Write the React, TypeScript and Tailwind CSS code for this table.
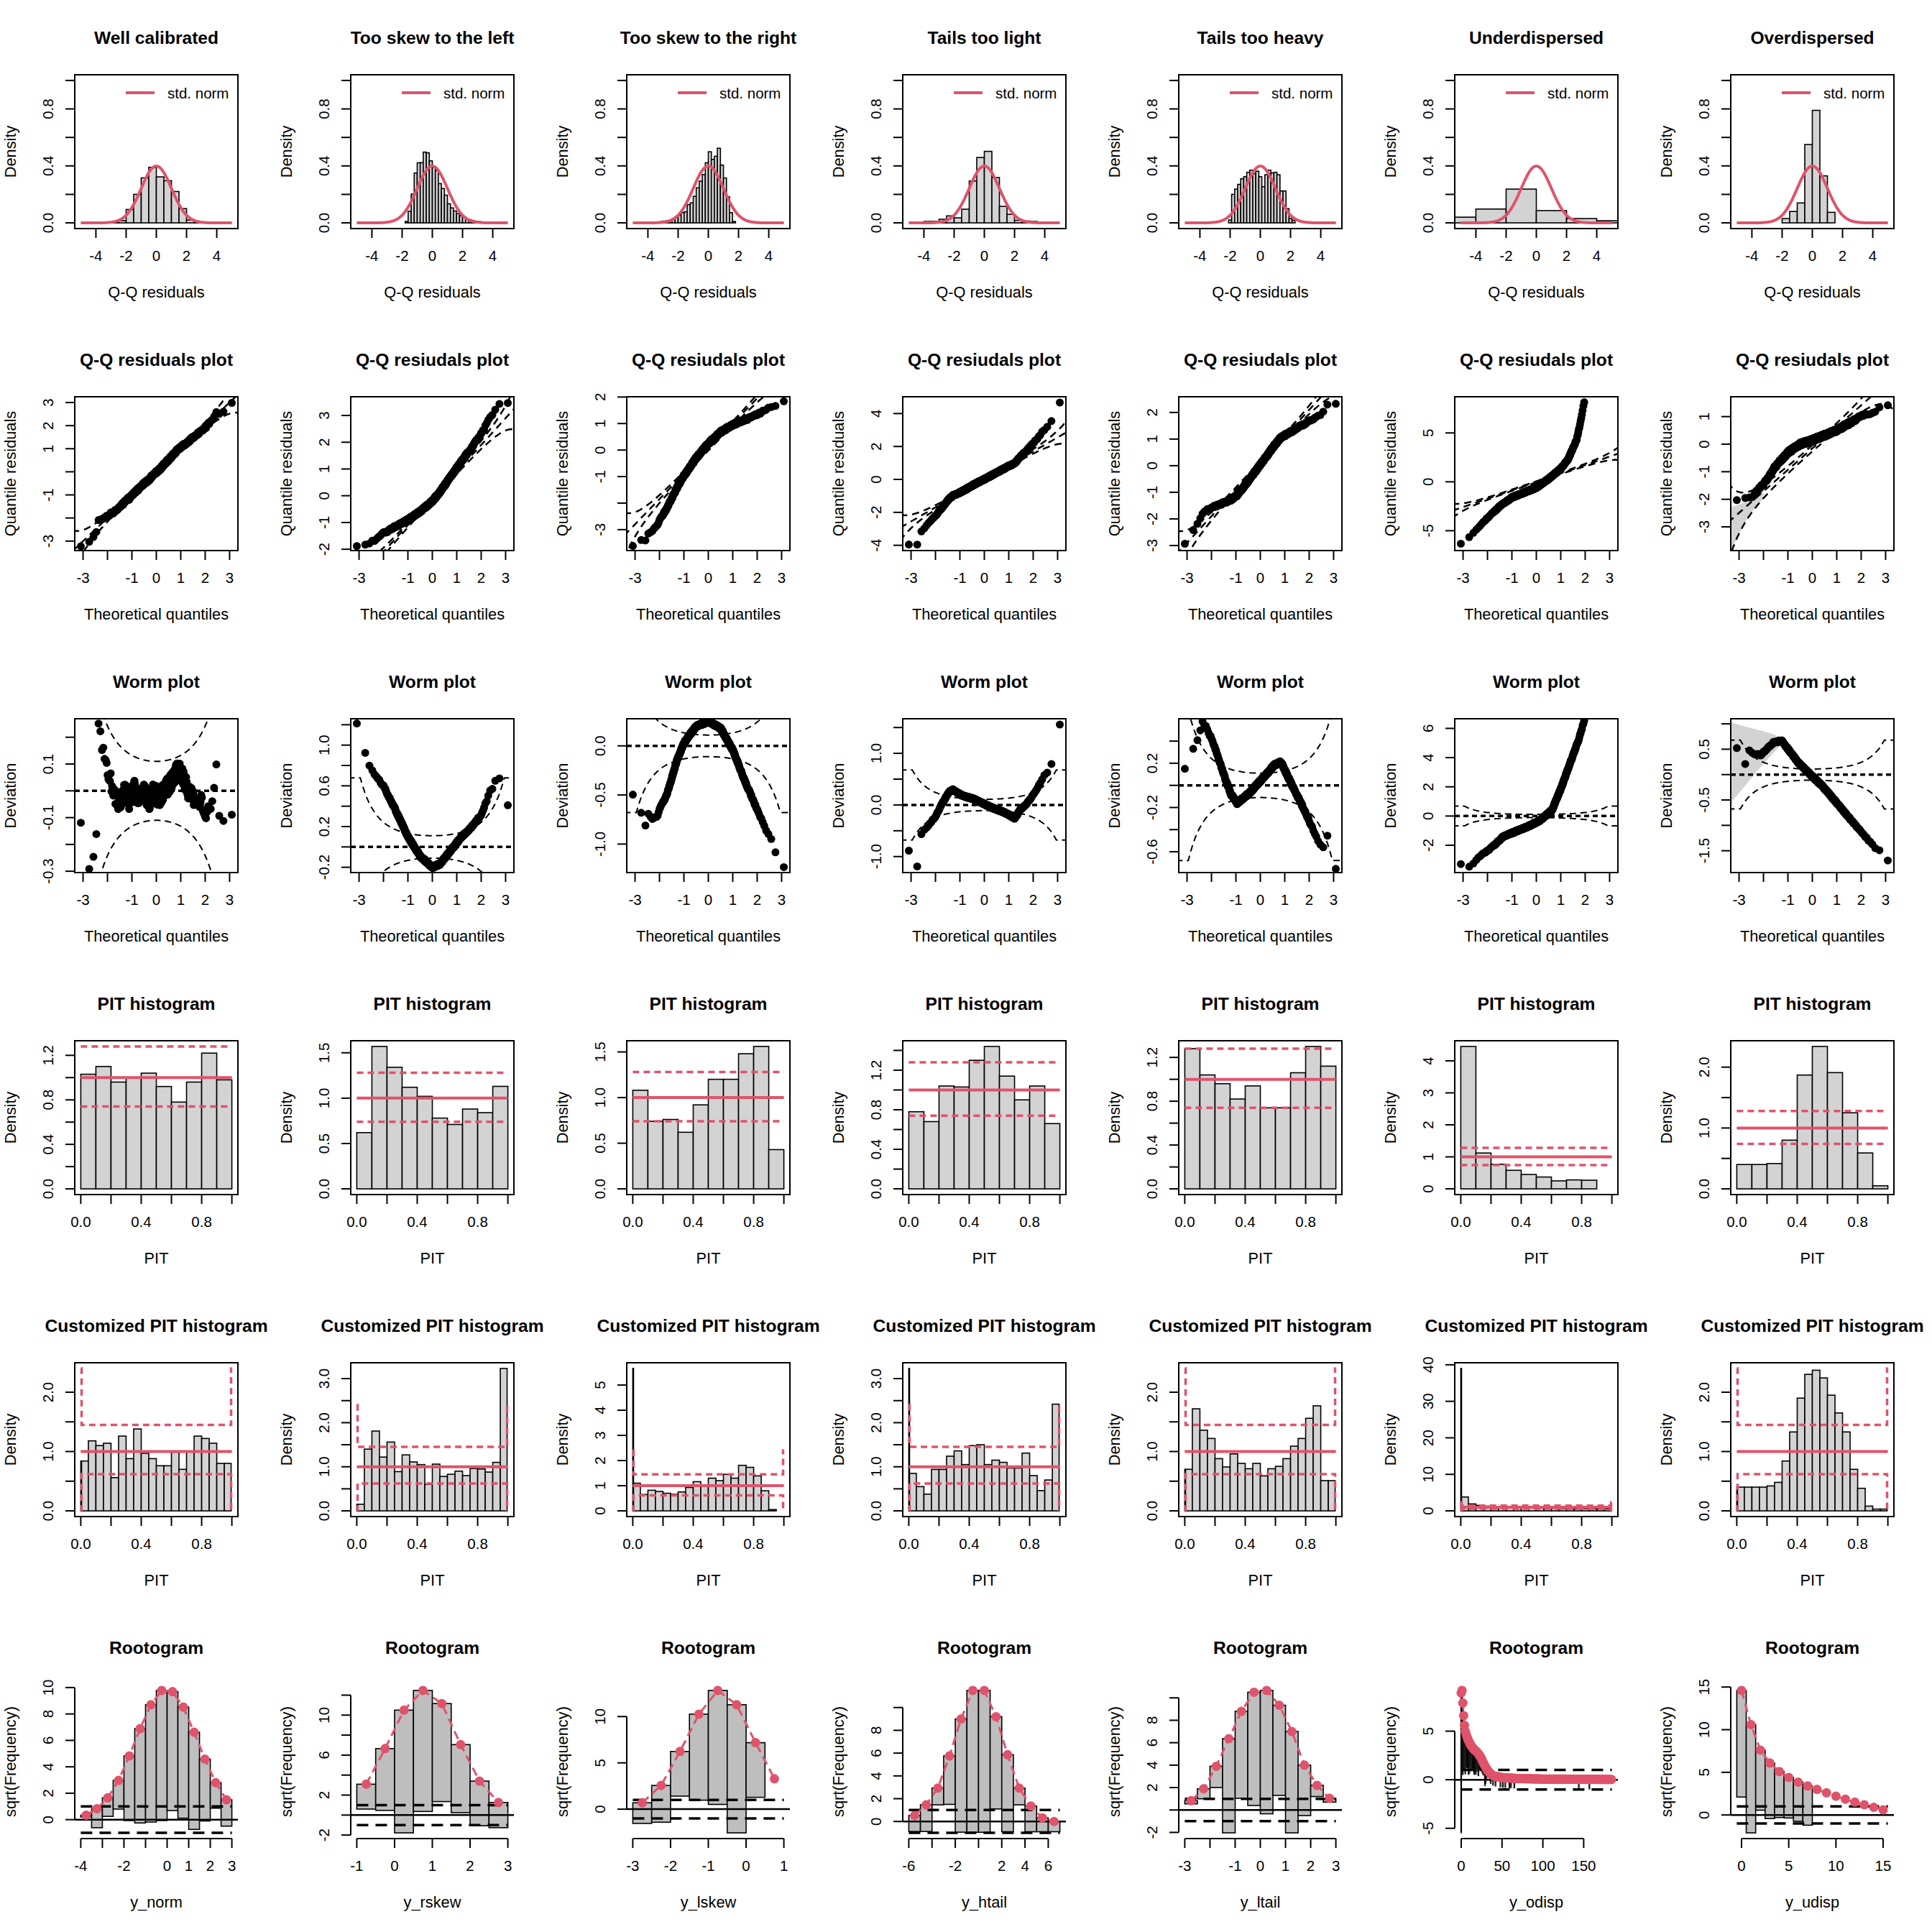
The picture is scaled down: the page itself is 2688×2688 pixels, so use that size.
import React from "react";

type Lim = [number, number];
type Pt = [number, number];
type Sc = { x: (v: number) => number; y: (v: number) => number };

const CW = 384;
const CH = 448;
const PL = 104;
const PR = 331;
const PT = 104;
const PB = 318;
const MID = (PL + PR) / 2;
const RED = "#DF536B";
const FS = 20.5;
const FL = 21.8;

const pad = (a: number, b: number): Lim => [a - 0.04 * (b - a), b + 0.04 * (b - a)];
const seq = (a: number, b: number, s: number) => {
  const out: number[] = [];
  for (let i = 0; a + i * s <= b + 1e-9; i++) out.push(+(a + i * s).toFixed(6));
  return out;
};
const f1 = (v: number) => v.toFixed(1);
const f0 = (v: number) => String(v);

function rng(seed: number) {
  let a = seed;
  return () => {
    a |= 0;
    a = (a + 0x6d2b79f5) | 0;
    let t = Math.imul(a ^ (a >>> 15), 1 | a);
    t = (t + Math.imul(t ^ (t >>> 7), 61 | t)) ^ t;
    return ((t ^ (t >>> 14)) >>> 0) / 4294967296;
  };
}

function qnorm(p: number) {
  const a = [-39.69683028665376, 220.9460984245205, -275.9285104469687, 138.357751867269, -30.66479806614716, 2.506628277459239];
  const b = [-54.47609879822406, 161.5858368580409, -155.6989798598866, 66.80131188771972, -13.28068155288572];
  const c = [-0.007784894002430293, -0.3223964580411365, -2.400758277161838, -2.549732539343734, 4.374664141464968, 2.938163982698783];
  const d = [0.007784695709041462, 0.3224671290700398, 2.445134137142996, 3.754408661907416];
  const lo = 0.02425;
  if (p < lo) {
    const q = Math.sqrt(-2 * Math.log(p));
    return (((((c[0] * q + c[1]) * q + c[2]) * q + c[3]) * q + c[4]) * q + c[5]) / ((((d[0] * q + d[1]) * q + d[2]) * q + d[3]) * q + 1);
  }
  if (p > 1 - lo) {
    const q = Math.sqrt(-2 * Math.log(1 - p));
    return -(((((c[0] * q + c[1]) * q + c[2]) * q + c[3]) * q + c[4]) * q + c[5]) / ((((d[0] * q + d[1]) * q + d[2]) * q + d[3]) * q + 1);
  }
  const q = p - 0.5;
  const r = q * q;
  return ((((((a[0] * r + a[1]) * r + a[2]) * r + a[3]) * r + a[4]) * r + a[5]) * q) / (((((b[0] * r + b[1]) * r + b[2]) * r + b[3]) * r + b[4]) * r + 1);
}

function pnorm(z: number) {
  const t = 1 / (1 + 0.2316419 * Math.abs(z));
  const d = 0.3989423 * Math.exp((-z * z) / 2);
  const p = d * t * (0.3193815 + t * (-0.3565638 + t * (1.781478 + t * (-1.821256 + t * 1.330274))));
  return z > 0 ? 1 - p : p;
}
const dnorm = (z: number) => Math.exp((-z * z) / 2) / Math.sqrt(2 * Math.PI);
const se = (z: number) => {
  const p = pnorm(z);
  return Math.sqrt((p * (1 - p)) / 500) / dnorm(z);
};

const interp = (c: Pt[], z: number) => {
  if (z <= c[0][0]) return c[0][1];
  for (let i = 1; i < c.length; i++) {
    if (z <= c[i][0]) {
      const [x0, y0] = c[i - 1];
      const [x1, y1] = c[i];
      return y0 + ((y1 - y0) * (z - x0)) / (x1 - x0);
    }
  }
  return c[c.length - 1][1];
};

const Z = Array.from({ length: 500 }, (_, i) => qnorm((i + 0.5) / 500));

const mkScale = (xl: Lim, yl: Lim): Sc => ({
  x: (v) => PL + ((v - xl[0]) / (xl[1] - xl[0])) * (PR - PL),
  y: (v) => PB - ((v - yl[0]) / (yl[1] - yl[0])) * (PB - PT),
});
const line = (pts: Pt[], s: Sc) =>
  pts.map(([x, y], i) => `${i ? "L" : "M"}${s.x(x).toFixed(1)},${s.y(y).toFixed(1)}`).join("");

type PanelProps = {
  id: string;
  title: string;
  xlab: string;
  ylab: string;
  xl: Lim;
  yl: Lim;
  xt: number[];
  xL: number[];
  yt: number[];
  yL: number[];
  fx?: (v: number) => string;
  fy?: (v: number) => string;
  box?: boolean;
  children: (s: Sc) => React.ReactNode;
};

function Panel({ id, title, xlab, ylab, xl, yl, xt, xL, yt, yL, fx = f0, fy = f0, box = true, children }: PanelProps) {
  const s = mkScale(xl, yl);
  return (
    <svg width={CW} height={CH} className="block">
      <defs>
        <clipPath id={id}>
          <rect x={PL} y={PT} width={PR - PL} height={PB - PT} />
        </clipPath>
      </defs>
      <text x={MID} y={61} textAnchor="middle" fontSize={24.6} fontWeight={700}>
        {title}
      </text>
      <g clipPath={`url(#${id})`}>{children(s)}</g>
      {box && <rect x={PL} y={PT} width={PR - PL} height={PB - PT} fill="none" stroke="#000" strokeWidth={2} />}
      <g stroke="#000" strokeWidth={2}>
        <line x1={s.x(Math.min(...xt))} x2={s.x(Math.max(...xt))} y1={PB} y2={PB} />
        {xt.map((t) => (
          <line key={`x${t}`} x1={s.x(t)} x2={s.x(t)} y1={PB} y2={PB + 13} />
        ))}
        <line x1={PL} x2={PL} y1={s.y(Math.min(...yt))} y2={s.y(Math.max(...yt))} />
        {yt.map((t) => (
          <line key={`y${t}`} x1={PL - 13} x2={PL} y1={s.y(t)} y2={s.y(t)} />
        ))}
      </g>
      <g fontSize={FS} textAnchor="middle">
        {xL.map((v) => (
          <text key={`xl${v}`} x={s.x(v)} y={363}>
            {fx(v)}
          </text>
        ))}
        {yL.map((v) => (
          <text key={`yl${v}`} transform={`translate(74 ${s.y(v).toFixed(1)}) rotate(-90)`}>
            {fy(v)}
          </text>
        ))}
      </g>
      <g fontSize={FL} textAnchor="middle">
        <text x={MID} y={414}>
          {xlab}
        </text>
        <text transform={`translate(21.5 ${(PT + PB) / 2}) rotate(-90)`}>{ylab}</text>
      </g>
    </svg>
  );
}

/* ---------- row 1: residual histograms ---------- */

const gpdf = (g: number) => (g <= 0 ? 0 : (g ** 3 * Math.exp(-g / 0.45)) / (6 * 0.45 ** 4));
const skewBars = (mirror: boolean, seed: number) => {
  const r = rng(seed);
  const x0 = mirror ? -3.6 : -2.0;
  const h: number[] = [];
  for (let i = 0; i < 28; i++) {
    const c = x0 + 0.2 * i + 0.1;
    h.push(gpdf(mirror ? 1.85 - c : c + 1.85) * (0.86 + 0.26 * r()));
  }
  return { x0, w: 0.2, h };
};

const ROW1 = [
  { title: "Well calibrated", x0: -3.5, w: 0.5, h: [0.003, 0.006, 0.016, 0.094, 0.2, 0.316, 0.39, 0.323, 0.296, 0.22, 0.1, 0.02, 0.005] },
  { title: "Too skew to the left", ...skewBars(false, 11) },
  { title: "Too skew to the right", ...skewBars(true, 12) },
  {
    title: "Tails too light",
    x0: -4,
    w: 0.5,
    h: [0.01, 0.01, 0.025, 0.049, 0.035, 0.096, 0.294, 0.459, 0.502, 0.318, 0.116, 0.06, 0.018, 0.013, 0.01],
  },
  {
    title: "Tails too heavy",
    x0: -2.1,
    w: 0.2,
    h: [0.02, 0.2, 0.237, 0.27, 0.31, 0.324, 0.355, 0.37, 0.345, 0.363, 0.324, 0.254, 0.338, 0.37, 0.35, 0.355, 0.338, 0.224, 0.224, 0.1, 0.03, 0.018],
  },
  { title: "Underdispersed", x0: -6, w: 2, h: [0.04, 0.097, 0.237, 0.086, 0.03, 0.015] },
  { title: "Overdispersed", x0: -2, w: 0.5, h: [0.03, 0.08, 0.14, 0.55, 0.79, 0.33, 0.074] },
];

function ResidHist({ id, title, x0, w, h }: { id: string; title: string; x0: number; w: number; h: number[] }) {
  return (
    <Panel
      id={id}
      title={title}
      xlab="Q-Q residuals"
      ylab="Density"
      xl={pad(-5, 5)}
      yl={pad(0, 1)}
      xt={[-4, -2, 0, 2, 4]}
      xL={[-4, -2, 0, 2, 4]}
      yt={seq(0, 1, 0.2)}
      yL={[0, 0.4, 0.8]}
      fy={f1}
    >
      {(s) => (
        <>
          {h.map((v, i) =>
            v > 0.002 ? (
              <rect
                key={i}
                x={s.x(x0 + i * w)}
                y={s.y(v)}
                width={s.x(x0 + (i + 1) * w) - s.x(x0 + i * w)}
                height={s.y(0) - s.y(v)}
                fill="#D3D3D3"
                stroke="#000"
                strokeWidth={1.6}
              />
            ) : null
          )}
          <path d={line(seq(-5, 5, 0.05).map((x) => [x, dnorm(x)] as Pt), s)} fill="none" stroke={RED} strokeWidth={4} />
          <line x1={175} x2={215} y1={129} y2={129} stroke={RED} strokeWidth={4} />
          <text x={233} y={136.5} fontSize={FS}>
            std. norm
          </text>
        </>
      )}
    </Panel>
  );
}

/* ---------- rows 2 and 3: Q-Q and worm plots ---------- */

type WSpec = { ctrl: Pt[]; yl: Lim; yt: number[]; yL: number[]; noise: number; int?: boolean; zmax?: number; shade?: Pt[] };
type QSpec = { ctrl?: Pt[]; yl: Lim; yt: number[]; yL: number[]; a: number; b: number; k: number; shade?: boolean };

const WORMS: WSpec[] = [
  {
    ctrl: [
      [-3.09, -0.1], [-2.75, -0.28], [-2.58, -0.25], [-2.46, -0.2], [-2.37, 0.25], [-2.29, 0.21], [-2.17, 0.16], [-2.0, 0.08],
      [-1.85, 0.03], [-1.7, -0.02], [-1.5, -0.05], [-1.3, 0.0], [-1.1, -0.04], [-0.9, 0.01], [-0.7, -0.03], [-0.5, 0.0],
      [-0.3, -0.04], [-0.1, 0.0], [0.1, -0.03], [0.3, 0.0], [0.5, 0.02], [0.7, 0.05], [0.9, 0.08], [1.1, 0.05], [1.3, 0.0],
      [1.5, -0.02], [1.7, -0.03], [1.9, -0.05], [2.05, -0.09], [2.2, -0.08], [2.29, -0.06], [2.37, 0.04], [2.46, 0.13],
      [2.58, -0.11], [2.75, -0.09], [3.09, -0.1],
    ],
    yl: [-0.305, 0.269],
    yt: [-0.3, -0.2, -0.1, 0, 0.1, 0.2],
    yL: [-0.3, -0.1, 0.1],
    noise: 0.032,
  },
  {
    ctrl: [
      [-3.09, 1.22], [-2.75, 0.92], [-2.58, 0.8], [-2.46, 0.75], [-2.3, 0.69], [-2.0, 0.6], [-1.5, 0.36], [-1.0, 0.1],
      [-0.5, -0.09], [0, -0.2], [0.3, -0.17], [0.7, -0.05], [1.2, 0.1], [1.7, 0.22], [2.0, 0.32], [2.17, 0.42], [2.29, 0.5],
      [2.37, 0.55], [2.46, 0.58], [2.58, 0.65], [2.75, 0.68], [3.09, 0.4],
    ],
    yl: [-0.252, 1.259],
    yt: [-0.2, 0, 0.2, 0.4, 0.6, 0.8, 1.0, 1.2],
    yL: [-0.2, 0.2, 0.6, 1.0],
    noise: 0.01,
  },
  {
    ctrl: [
      [-3.09, -0.5], [-2.75, -0.68], [-2.58, -0.82], [-2.46, -0.7], [-2.3, -0.75], [-2.1, -0.72], [-1.95, -0.62], [-1.7, -0.5],
      [-1.3, -0.16], [-1.0, 0.03], [-0.5, 0.2], [0, 0.25], [0.5, 0.18], [1.0, -0.04], [1.5, -0.36], [2.0, -0.65], [2.36, -0.85],
      [2.58, -0.95], [2.75, -1.09], [3.09, -1.24],
    ],
    yl: [-1.29, 0.276],
    yt: [-1, -0.5, 0],
    yL: [-1, -0.5, 0],
    noise: 0.01,
  },
  {
    ctrl: [
      [-3.09, -0.88], [-2.75, -1.21], [-2.58, -0.56], [-2.3, -0.4], [-2.0, -0.22], [-1.7, 0.05], [-1.45, 0.25], [-1.3, 0.3],
      [-0.9, 0.18], [-0.45, 0.12], [0.3, -0.05], [0.8, -0.14], [1.0, -0.19], [1.25, -0.26], [1.45, -0.1], [1.7, 0.0],
      [2.0, 0.2], [2.2, 0.35], [2.36, 0.5], [2.46, 0.58], [2.58, 0.62], [2.75, 0.8], [3.09, 1.55],
    ],
    yl: [-1.31, 1.67],
    yt: [-1, -0.5, 0, 0.5, 1, 1.5],
    yL: [-1, 0, 1],
    noise: 0.012,
  },
  {
    ctrl: [
      [-3.09, 0.14], [-2.75, 0.32], [-2.58, 0.4], [-2.46, 0.5], [-2.37, 0.58], [-2.2, 0.52], [-2.0, 0.42], [-1.8, 0.3],
      [-1.5, 0.1], [-1.2, -0.08], [-0.95, -0.16], [-0.45, -0.07], [0, 0.04], [0.6, 0.19], [0.85, 0.21], [1.3, 0.0],
      [1.8, -0.22], [2.2, -0.42], [2.36, -0.5], [2.46, -0.53], [2.58, -0.57], [2.75, -0.46], [3.09, -0.76],
    ],
    yl: [-0.788, 0.602],
    yt: [-0.6, -0.4, -0.2, 0, 0.2, 0.4],
    yL: [-0.6, -0.2, 0.2],
    noise: 0.01,
  },
  {
    ctrl: [
      [-3.09, -3.25], [-2.75, -3.45], [-2.58, -3.3], [-2.35, -2.8], [-1.85, -2.2], [-1.35, -1.4], [-0.85, -1.05],
      [-0.35, -0.72], [0.15, -0.3], [0.65, 0.43], [1.05, 2.07], [1.4, 3.7], [1.75, 5.3], [1.95, 6.5],
    ],
    yl: [-3.87, 6.66],
    yt: [-2, 0, 2, 4, 6],
    yL: [-2, 0, 2, 4, 6],
    noise: 0.05,
    int: true,
    zmax: 1.96,
  },
  {
    ctrl: [
      [-3.09, 0.53], [-2.75, 0.2], [-2.58, 0.49], [-2.46, 0.42], [-2.3, 0.4], [-2.1, 0.39], [-1.6, 0.63], [-1.25, 0.67],
      [-0.6, 0.25], [-0.1, 0.01], [0.4, -0.22], [0.9, -0.5], [1.4, -0.79], [1.9, -1.07], [2.4, -1.35], [2.58, -1.45],
      [2.75, -1.5], [3.09, -1.68],
    ],
    yl: [-1.93, 1.1],
    yt: [-1.5, -1, -0.5, 0, 0.5, 1],
    yL: [-1.5, -0.5, 0.5],
    noise: 0.015,
    shade: [
      [-3.45, 1.05], [-2.8, 0.95], [-2.2, 0.88], [-1.6, 0.8], [-1.1, 0.68], [-1.6, 0.42], [-2.2, 0.1], [-2.8, -0.25], [-3.45, -0.62],
    ],
  },
];

const QQS: QSpec[] = [
  { yl: [-3.41, 3.25], yt: [-3, -2, -1, 0, 1, 2, 3], yL: [3, 2, 1, -1, -3], a: 0, b: 1, k: 1.3 },
  { yl: [-2.05, 3.7], yt: [-2, -1, 0, 1, 2, 3], yL: [-2, -1, 0, 1, 2, 3], a: -0.1, b: 1.0, k: 1.25 },
  { yl: [-3.79, 2.01], yt: [-3, -2, -1, 0, 1, 2], yL: [-3, -1, 0, 1, 2], a: 0.05, b: 0.95, k: 1.3 },
  { yl: [-4.32, 5.02], yt: [-4, -2, 0, 2, 4], yL: [-4, -2, 0, 2, 4], a: 0, b: 0.85, k: 1.3 },
  { yl: [-3.19, 2.59], yt: [-3, -2, -1, 0, 1, 2], yL: [-3, -2, -1, 0, 1, 2], a: 0.1, b: 1.0, k: 1.3 },
  {
    ctrl: [
      [-3.09, -6.3], [-2.85, -6.0], [-2.5, -5.0], [-2.0, -3.7], [-1.5, -2.5], [-1.0, -1.6], [-0.5, -1.1], [0, -0.6], [0.5, 0.3],
      [1, 1.35], [1.3, 2.3], [1.65, 4.3], [1.8, 6.0], [1.95, 8.1],
    ],
    yl: [-7.03, 8.7],
    yt: [-5, 0, 5],
    yL: [-5, 0, 5],
    a: 0,
    b: 0.86,
    k: 1.2,
  },
  {
    ctrl: [
      [-3.09, -2.05], [-2.75, -2.0], [-2.58, -1.98], [-2.4, -1.85], [-2.0, -1.45], [-1.5, -0.8], [-1.0, -0.3], [-0.5, 0.0],
      [0, 0.15], [1, 0.5], [2, 1.0], [2.5, 1.2], [2.75, 1.3], [3.09, 1.37],
    ],
    yl: [-3.86, 1.72],
    yt: [-3, -2, -1, 0, 1],
    yL: [-3, -2, -1, 0, 1],
    a: -0.15,
    b: 0.78,
    k: 2.6,
    shade: true,
  },
];

const WORM_PTS: Pt[][] = WORMS.map((w, i) => {
  const r = rng(100 + i);
  return Z.filter((z) => z <= (w.zmax ?? 9)).map((z) => [z, interp(w.ctrl, z) + w.noise * (r() - 0.5) * 2] as Pt);
});
const QQ_PTS: Pt[][] = QQS.map((q, i) => {
  const r = rng(200 + i);
  if (!q.ctrl) return WORM_PTS[i].map(([z, d]) => [z, z + d + 0.04 * (r() - 0.5) * 2] as Pt);
  const c = q.ctrl;
  return Z.filter((z) => z <= c[c.length - 1][0] + 0.01).map((z) => [z, interp(c, z) + 0.06 * (r() - 0.5) * 2] as Pt);
});

const ZS = seq(-3.45, 3.45, 0.05);
const QX: Lim = [-3.34, 3.34];

function QQPanel({ id, title, q, pts }: { id: string; title: string; q: QSpec; pts: Pt[] }) {
  const c = (z: number) => q.a + q.b * z;
  const d = (z: number) => q.k * q.b * se(z);
  const left = ZS.filter((z) => z <= -2);
  return (
    <Panel
      id={id}
      title={title}
      xlab="Theoretical quantiles"
      ylab="Quantile residuals"
      xl={QX}
      yl={q.yl}
      xt={seq(-3, 3, 1)}
      xL={[-3, -1, 0, 1, 2, 3]}
      yt={q.yt}
      yL={q.yL}
    >
      {(s) => (
        <>
          {q.shade && (
            <path
              d={line([...left.map((z) => [z, c(z) + 0.4 * d(z)] as Pt), ...[...left].reverse().map((z) => [z, c(z) - d(z)] as Pt)], s) + "Z"}
              fill="#D3D3D3"
            />
          )}
          <g fill="none" stroke="#000" strokeWidth={2.5} strokeDasharray="10 7">
            <path d={line(ZS.map((z) => [z, c(z)] as Pt), s)} />
            <path d={line(ZS.map((z) => [z, c(z) + d(z)] as Pt), s)} />
            <path d={line(ZS.map((z) => [z, c(z) - d(z)] as Pt), s)} />
          </g>
          <g fill="#000">
            {pts.map(([x, y], i) => (
              <circle key={i} cx={s.x(x)} cy={s.y(y)} r={5.5} />
            ))}
          </g>
        </>
      )}
    </Panel>
  );
}

function WormPanel({ id, w, pts }: { id: string; w: WSpec; pts: Pt[] }) {
  const band = (z: number) => 1.96 * se(Math.max(-2.95, Math.min(2.95, z)));
  return (
    <Panel
      id={id}
      title="Worm plot"
      xlab="Theoretical quantiles"
      ylab="Deviation"
      xl={QX}
      yl={w.yl}
      xt={seq(-3, 3, 1)}
      xL={[-3, -1, 0, 1, 2, 3]}
      yt={w.yt}
      yL={w.yL}
      fy={w.int ? f0 : f1}
    >
      {(s) => (
        <>
          {w.shade && <path d={line(w.shade, s) + "Z"} fill="#D3D3D3" />}
          <g fill="none" stroke="#000" strokeWidth={2} strokeDasharray="9 6">
            <path d={line(ZS.map((z) => [z, band(z)] as Pt), s)} />
            <path d={line(ZS.map((z) => [z, -band(z)] as Pt), s)} />
          </g>
          <line x1={PL} x2={PR} y1={s.y(0)} y2={s.y(0)} stroke="#000" strokeWidth={3.5} strokeDasharray="7 5" />
          <g fill="#000">
            {pts.map(([x, y], i) => (
              <circle key={i} cx={s.x(x)} cy={s.y(y)} r={5.5} />
            ))}
          </g>
        </>
      )}
    </Panel>
  );
}

/* ---------- rows 4 and 5: PIT histograms ---------- */

type PSpec = { h: number[]; yt: number[]; yL: number[]; int?: boolean };

const PIT4: PSpec[] = [
  { h: [1.03, 1.1, 0.96, 1.0, 1.04, 0.92, 0.78, 0.96, 1.22, 0.98], yt: seq(0, 1.2, 0.2), yL: [0, 0.4, 0.8, 1.2] },
  { h: [0.62, 1.57, 1.34, 1.12, 1.02, 0.78, 0.71, 0.88, 0.84, 1.13], yt: [0, 0.5, 1, 1.5], yL: [0, 0.5, 1, 1.5] },
  { h: [1.08, 0.74, 0.76, 0.62, 0.92, 1.2, 1.2, 1.48, 1.56, 0.43], yt: [0, 0.5, 1, 1.5], yL: [0, 0.5, 1, 1.5] },
  { h: [0.78, 0.68, 1.04, 1.03, 1.3, 1.44, 1.14, 0.9, 1.04, 0.66], yt: seq(0, 1.4, 0.2), yL: [0, 0.4, 0.8, 1.2] },
  { h: [1.28, 1.04, 0.96, 0.82, 0.94, 0.74, 0.74, 1.06, 1.3, 1.12], yt: seq(0, 1.2, 0.2), yL: [0, 0.4, 0.8, 1.2] },
  { h: [4.45, 1.12, 0.77, 0.58, 0.45, 0.37, 0.25, 0.28, 0.27, 0], yt: [0, 1, 2, 3, 4], yL: [0, 1, 2, 3, 4], int: true },
  { h: [0.4, 0.4, 0.416, 0.8, 1.87, 2.34, 1.91, 1.25, 0.59, 0.05], yt: seq(0, 2, 0.5), yL: [0, 1, 2] },
];

const cust = (nl: number, m: number[], nr: number) => [nl, ...m, nr];
const PIT5: PSpec[] = [
  { h: cust(0.84, [0.84, 1.18, 1.1, 1.14, 0.56, 1.26, 0.88, 1.38, 0.97, 0.88, 0.76, 0.76, 0.99, 0.7, 1.0, 1.26, 1.22, 1.14, 0.8], 0.8), yt: seq(0, 2, 0.5), yL: [0, 1, 2] },
  { h: cust(0.15, [0.15, 1.4, 1.81, 1.22, 1.56, 0.89, 1.27, 1.11, 1.05, 0.6, 1.06, 0.78, 0.83, 0.9, 0.8, 0.96, 0.95, 0.88, 1.1], 3.23), yt: seq(0, 3, 0.5), yL: [0, 1, 2, 3] },
  { h: cust(5.66, [1.1, 0.65, 0.82, 0.77, 0.7, 0.66, 0.75, 0.93, 1.16, 1.0, 1.3, 1.2, 1.45, 1.3, 1.81, 1.73, 1.39, 0.8, 0.05], 0), yt: [0, 1, 2, 3, 4, 5], yL: [0, 1, 2, 3, 4, 5], int: true },
  { h: cust(3.23, [0.85, 0.55, 0.38, 0.94, 0.94, 1.24, 1.36, 1.05, 1.48, 1.5, 1.05, 1.15, 1.1, 0.97, 0.97, 1.31, 0.8, 0.46, 0.7], 2.42), yt: seq(0, 3, 0.5), yL: [0, 1, 2, 3] },
  { h: cust(0.7, [0.7, 1.72, 1.36, 1.22, 0.88, 0.74, 0.96, 0.8, 0.71, 0.8, 0.59, 0.71, 0.75, 0.88, 1.09, 1.22, 1.56, 1.77, 0.51], 0.51), yt: seq(0, 2, 0.5), yL: [0, 1, 2] },
  { h: cust(39, [3.8, 1.9, 1.5, 1.3, 1.1, 1.0, 0.9, 0.85, 0.8, 0.8, 0.75, 0.7, 0.7, 0.65, 0.65, 0.6, 0.6, 0.6, 0.55], 0.55), yt: [0, 10, 20, 30, 40], yL: [0, 10, 20, 30, 40], int: true },
  { h: cust(0.4, [0.4, 0.4, 0.4, 0.4, 0.42, 0.48, 0.84, 1.33, 1.9, 2.3, 2.37, 2.24, 1.95, 1.65, 1.33, 0.7, 0.38, 0.08, 0.03], 0.03), yt: seq(0, 2, 0.5), yL: [0, 1, 2] },
];

const E10 = seq(0, 1, 0.1);
const E21 = [0, 0.005, ...seq(0.05, 0.95, 0.05), 0.995, 1];
const B4U: Pt[] = [[0, 1.28], [1, 1.28]];
const B4L: Pt[] = [[0, 0.74], [1, 0.74]];
const B5U: Pt[] = [[0, 2.4], [0.005, 2.4], [0.005, 1.45], [0.995, 1.45], [0.995, 2.4], [1, 2.4]];
const B5L: Pt[] = [[0, 0], [0.005, 0], [0.005, 0.62], [0.995, 0.62], [0.995, 0], [1, 0]];

function PitPanel({ id, title, edges, p, upper, lower }: { id: string; title: string; edges: number[]; p: PSpec; upper: Pt[]; lower: Pt[] }) {
  const top = Math.max(...p.h, ...upper.map((u) => u[1]));
  return (
    <Panel
      id={id}
      title={title}
      xlab="PIT"
      ylab="Density"
      xl={pad(0, 1)}
      yl={pad(0, top)}
      xt={seq(0, 1, 0.2)}
      xL={[0, 0.4, 0.8]}
      yt={p.yt}
      yL={p.yL}
      fx={f1}
      fy={p.int ? f0 : f1}
    >
      {(s) => (
        <>
          {p.h.map((v, i) => (
            <rect
              key={i}
              x={s.x(edges[i])}
              y={s.y(v)}
              width={s.x(edges[i + 1]) - s.x(edges[i])}
              height={s.y(0) - s.y(v)}
              fill="#D3D3D3"
              stroke="#000"
              strokeWidth={1.6}
            />
          ))}
          <line x1={s.x(0)} x2={s.x(1)} y1={s.y(1)} y2={s.y(1)} stroke={RED} strokeWidth={4} />
          <g fill="none" stroke={RED} strokeWidth={3.5} strokeDasharray="9 6">
            <path d={line(upper, s)} />
            <path d={line(lower, s)} />
          </g>
        </>
      )}
    </Panel>
  );
}

/* ---------- row 6: rootograms ---------- */

type RBin = { x0: number; x1: number; e: number; b: number };
const bins = (x0: number, w: number, e: number[], b: number[]): RBin[] =>
  e.map((v, i) => ({ x0: x0 + i * w, x1: x0 + (i + 1) * w, e: v, b: Math.min(b[i], v) }));

const odE: Pt[] = [
  [0, 8.94], [1, 9.19], [2, 7.9], [3, 6.6], [4, 5.6], [5, 5.0], [6, 4.7], [8, 4.2], [12, 3.5], [16, 3.1], [20, 2.8],
  [24, 2.3], [28, 1.6], [32, 1.0], [36, 0.6], [40, 0.38], [50, 0.22], [70, 0.12], [100, 0.07], [184, 0.03],
];
const odHang = new Set([31, 36, 39, 42, 48, 51, 54, 59, 61, 65, 144, 157]);
const odBins: RBin[] = (() => {
  const r = rng(77);
  return Array.from({ length: 185 }, (_, k) => {
    const e = interp(odE, k);
    let b = e;
    if (k === 0) b = -5.47;
    else if (k <= 20) b = 0.5 + 0.9 * r();
    else if (k <= 30) b = e - (1 + 1.3 * r());
    else if (odHang.has(k)) b = e - 1;
    return { x0: k - 0.5, x1: k + 0.5, e, b: Math.min(b, e) };
  });
})();

const udE = [14.6, 10.6, 7.6, 6.1, 5.1, 4.4, 3.85, 3.4, 3.0, 2.6, 2.2, 1.85, 1.5, 1.2, 0.9, 0.6];
const udB = [2.1, -2.1, 0.56, -0.42, -0.3, -0.35, -0.75, -1.2, ...udE.slice(8)];

const ROOTS = [
  {
    xlab: "y_norm",
    bins: bins(-4, 0.5, [0.34, 0.83, 1.65, 2.97, 4.83, 6.89, 8.7, 9.78, 9.69, 8.52, 6.62, 4.58, 2.8, 1.5], [0.2, -0.61, 0.25, 0.8, -0.07, -0.25, -0.18, -0.07, 0.69, 0.11, -0.74, -0.1, 0.87, -0.49]),
    xt: seq(-4, 3, 1),
    xL: [-4, -2, 0, 1, 2, 3],
    yt: seq(0, 10, 2),
    yL: seq(0, 10, 2),
  },
  {
    xlab: "y_rskew",
    bins: bins(-1, 0.5, [3.09, 6.65, 10.5, 12.47, 11.16, 7.05, 3.4, 1.26], [0.6, 0.47, -1.78, 0.36, 1.35, 0.24, -1.07, -1.26]),
    xt: seq(-1, 3, 1),
    xL: seq(-1, 3, 1),
    yt: seq(-2, 12, 2),
    yL: [-2, 2, 6, 10],
  },
  {
    xlab: "y_lskew",
    bins: bins(-3, 0.5, [0.69, 2.56, 6.23, 10.26, 12.82, 11.28, 7.18, 3.28], [-1.54, -1.41, 1.41, 0.97, 0.51, -2.56, 1.28, 3.28]),
    xt: seq(-3, 1, 1),
    xL: seq(-3, 1, 1),
    yt: [0, 5, 10],
    yL: [0, 5, 10],
  },
  {
    xlab: "y_htail",
    bins: bins(-6, 1, [0.52, 1.46, 2.93, 5.75, 9.0, 11.5, 11.5, 9.2, 5.86, 2.93, 1.36, 0.31, 0.0], [-0.88, -0.88, 1.46, 1.5, -0.94, -0.95, -0.95, 1.1, -0.9, 1.46, -0.9, -0.9, -0.9]),
    xt: seq(-6, 6, 2),
    xL: [-6, -2, 2, 4, 6],
    yt: seq(0, 10, 2),
    yL: [0, 2, 4, 6, 8],
  },
  {
    xlab: "y_ltail",
    bins: bins(-3, 0.5, [0.83, 1.89, 3.9, 6.36, 8.8, 10.5, 10.66, 9.34, 7.0, 4.0, 2.2, 1.04], [0.55, 1.0, 2.0, -2.04, 1.04, 0.4, -0.34, 1.3, -2.04, -0.5, 1.2, 0.7]),
    xt: seq(-3, 3, 1),
    xL: [-3, -1, 0, 1, 2, 3],
    yt: seq(-2, 10, 2),
    yL: [-2, 2, 4, 6, 8],
  },
  { xlab: "y_odisp", bins: odBins, xt: [0, 50, 100, 150], xL: [0, 50, 100, 150], yt: [-5, 0, 5], yL: [-5, 0, 5], thin: true },
  { xlab: "y_udisp", bins: bins(-0.5, 1, udE, udB), xt: [0, 5, 10, 15], xL: [0, 5, 10, 15], yt: [0, 5, 10, 15], yL: [0, 5, 10, 15] },
];

function RootoPanel({ id, xlab, bins: bs, xt, xL, yt, yL, thin }: { id: string; xlab: string; bins: RBin[]; xt: number[]; xL: number[]; yt: number[]; yL: number[]; thin?: boolean }) {
  const lo = Math.min(-1, ...bs.map((b) => b.b));
  const hi = Math.max(...bs.map((b) => b.e));
  const x0 = bs[0].x0;
  const x1 = bs[bs.length - 1].x1;
  const pts: Pt[] = bs.map((b) => [(b.x0 + b.x1) / 2, b.e]);
  return (
    <Panel id={id} title="Rootogram" xlab={xlab} ylab="sqrt(Frequency)" xl={pad(x0, x1)} yl={pad(lo, hi)} xt={xt} xL={xL} yt={yt} yL={yL} box={false}>
      {(s) => (
        <>
          {bs.map((b, i) =>
            b.e - b.b > 1e-6 ? (
              <rect
                key={i}
                x={s.x(b.x0)}
                y={s.y(b.e)}
                width={s.x(b.x1) - s.x(b.x0)}
                height={s.y(b.b) - s.y(b.e)}
                fill="#BEBEBE"
                stroke="#000"
                strokeWidth={thin ? 1.1 : 1.6}
              />
            ) : null
          )}
          <line x1={PL} x2={PR} y1={s.y(0)} y2={s.y(0)} stroke="#000" strokeWidth={2.5} />
          <g stroke="#000" strokeWidth={3.5} strokeDasharray="16 10">
            <line x1={s.x(x0)} x2={s.x(x1)} y1={s.y(1)} y2={s.y(1)} />
            <line x1={s.x(x0)} x2={s.x(x1)} y1={s.y(-1)} y2={s.y(-1)} />
          </g>
          <path d={line(pts, s)} fill="none" stroke={RED} strokeWidth={3} strokeDasharray="12 7" />
          <g fill={RED}>
            {pts.map(([x, y], i) => (
              <circle key={i} cx={s.x(x)} cy={s.y(y)} r={6.5} />
            ))}
          </g>
        </>
      )}
    </Panel>
  );
}

export default function App() {
  return (
    <div className="grid w-[2688px] h-[2688px] grid-cols-[repeat(7,384px)] grid-rows-[repeat(6,448px)] bg-white text-black font-['Liberation_Sans',Arial,sans-serif]">
      {ROW1.map((r, i) => (
        <ResidHist key={`r1${i}`} id={`r1c${i}`} title={r.title} x0={r.x0} w={r.w} h={r.h} />
      ))}
      {QQS.map((q, i) => (
        <QQPanel key={`r2${i}`} id={`r2c${i}`} title={i === 0 ? "Q-Q residuals plot" : "Q-Q resiudals plot"} q={q} pts={QQ_PTS[i]} />
      ))}
      {WORMS.map((w, i) => (
        <WormPanel key={`r3${i}`} id={`r3c${i}`} w={w} pts={WORM_PTS[i]} />
      ))}
      {PIT4.map((p, i) => (
        <PitPanel key={`r4${i}`} id={`r4c${i}`} title="PIT histogram" edges={E10} p={p} upper={B4U} lower={B4L} />
      ))}
      {PIT5.map((p, i) => (
        <PitPanel key={`r5${i}`} id={`r5c${i}`} title="Customized PIT histogram" edges={E21} p={p} upper={B5U} lower={B5L} />
      ))}
      {ROOTS.map((r, i) => (
        <RootoPanel key={`r6${i}`} id={`r6c${i}`} {...r} />
      ))}
    </div>
  );
}
